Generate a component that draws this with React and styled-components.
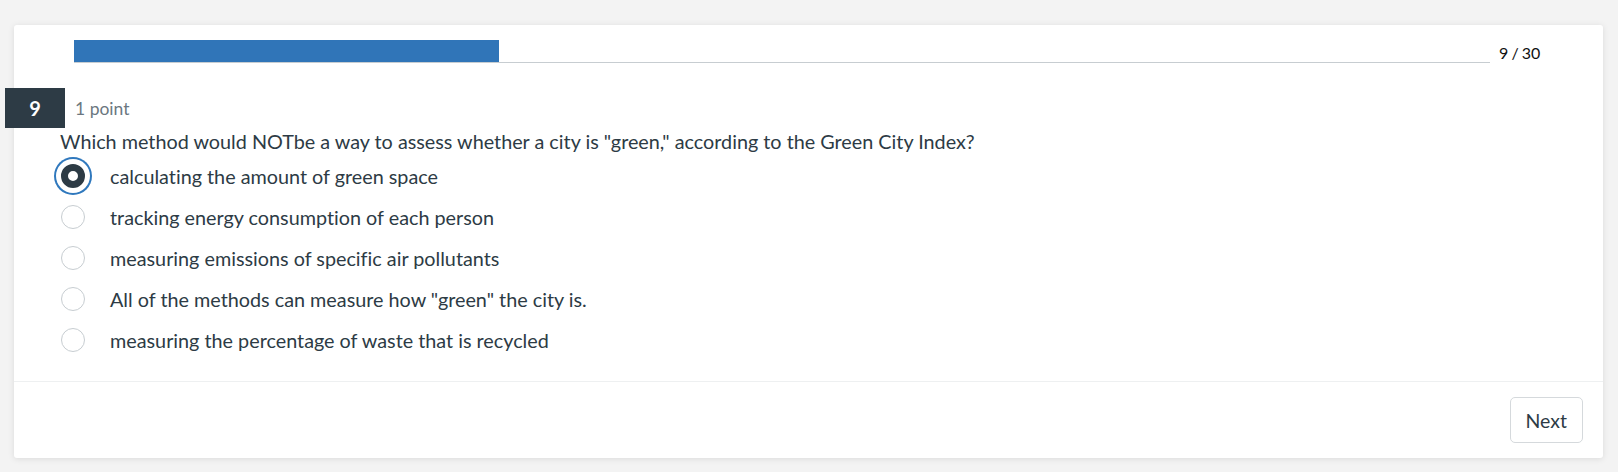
import { useState } from "react";
import styled, { createGlobalStyle } from "styled-components";

const GlobalStyle = createGlobalStyle`
  html, body {
    margin: 0;
    padding: 0;
    background: #f3f3f3;
    font-family: Lato, "Open Sans", sans-serif;
    font-variant-ligatures: none;
    color: #2d3b45;
  }
`;

const Page = styled.div`
  padding: 25px 15px 14px 14px;
`;

const Card = styled.div`
  background: #fff;
  border-radius: 3px;
  box-shadow: 0 1px 6px rgba(0, 0, 0, 0.1);
`;

const Header = styled.div`
  display: flex;
  align-items: center;
  padding: 15px 0 0 60px;
`;

const Track = styled.div`
  width: 1416px;
  height: 22px;
  border-bottom: 1px solid #c7cdd1;
`;

const Fill = styled.div`
  height: 100%;
  background: #3075b8;
`;

const Count = styled.span`
  margin-left: 9px;
  font-size: 16px;
  word-spacing: -1px;
  color: #111;
  padding-top: 1px;
`;

const Body = styled.div`
  padding: 25px 0 20px 46px;
`;

const Meta = styled.div`
  display: flex;
  align-items: center;
  margin-left: -55px;
`;

const Badge = styled.div`
  width: 60px;
  height: 40px;
  background: #2d3b45;
  color: #fff;
  font-size: 20px;
  font-weight: 700;
  display: flex;
  align-items: center;
  justify-content: center;
`;

const Points = styled.span`
  margin-left: 10px;
  font-size: 17.5px;
  color: #6b7780;
`;

const Question = styled.p`
  margin: 0 0 2px;
  font-size: 19.8px;
  line-height: 26px;
`;

const Option = styled.label`
  display: flex;
  align-items: center;
  height: 41px;
  padding-bottom: 1px;
  box-sizing: border-box;
  font-size: 19.8px;
  cursor: pointer;
`;

const Radio = styled.span`
  width: 24px;
  height: 24px;
  box-sizing: border-box;
  border-radius: 50%;
  margin-left: 1px;
  margin-right: 25px;
  background: #fff;
  border: ${(p) => (p.$checked ? "7px solid #2d3b45" : "1px solid #c7cdd1")};
  box-shadow: ${(p) =>
    p.$checked ? "0 0 0 5px #fff, 0 0 0 7px #2f78bd" : "none"};
`;

const Footer = styled.div`
  display: flex;
  justify-content: flex-end;
  border-top: 1px solid #eef0f1;
  padding: 15px 20px 15px 0;
`;

const Button = styled.button`
  height: 46px;
  padding: 0 15px;
  background: #fff;
  border: 1px solid #d5d9dc;
  border-radius: 5px;
  font-family: Lato, sans-serif;
  font-size: 19.5px;
  color: #2d3b45;
`;

const options = [
  "calculating the amount of green space",
  "tracking energy consumption of each person",
  "measuring emissions of specific air pollutants",
  'All of the methods can measure how "green" the city is.',
  "measuring the percentage of waste that is recycled",
];

export default function App() {
  const [picked, setPicked] = useState(0);
  const current = 9;
  const total = 30;

  return (
    <Page>
      <GlobalStyle />
      <Card>
        <Header>
          <Track>
            <Fill style={{ width: `${(current / total) * 100}%` }} />
          </Track>
          <Count>
            {current} / {total}
          </Count>
        </Header>
        <Body>
          <Meta>
            <Badge>{current}</Badge>
            <Points>1 point</Points>
          </Meta>
          <Question>
            Which method would NOTbe a way to assess whether a city is
            "green," according to the Green City Index?
          </Question>
          {options.map((text, i) => (
            <Option key={i} onClick={() => setPicked(i)}>
              <Radio $checked={picked === i} />
              {text}
            </Option>
          ))}
        </Body>
        <Footer>
          <Button>Next</Button>
        </Footer>
      </Card>
    </Page>
  );
}
